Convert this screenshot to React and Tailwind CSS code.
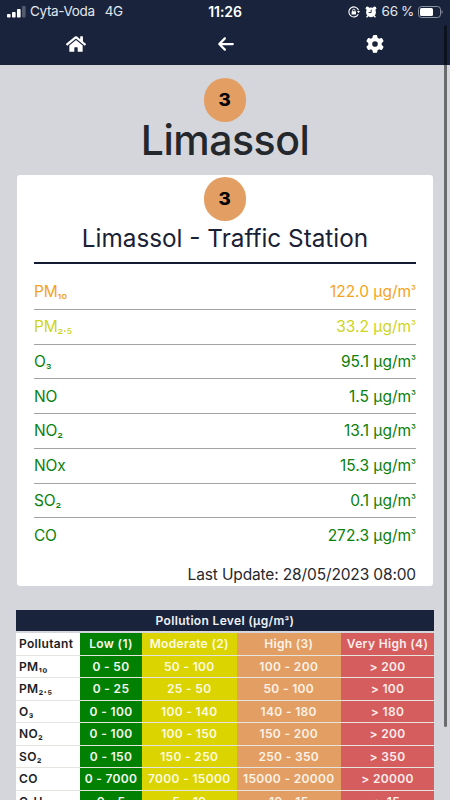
import clsx from 'clsx';
import { FaHome } from 'react-icons/fa';
import { FaArrowLeft, FaGear } from 'react-icons/fa6';

const readings = [
    { name: 'PM', sub: '₁₀', value: '122.0', color: 'text-[#f5a31c]' },
    { name: 'PM', sub: '₂.₅', value: '33.2', color: 'text-[#cdd51c]' },
    { name: 'O', sub: '₃', value: '95.1', color: 'text-[#0b800b]' },
    { name: 'NO', value: '1.5', color: 'text-[#0b800b]' },
    { name: 'NO', sub: '₂', value: '13.1', color: 'text-[#0b800b]' },
    { name: 'NOx', value: '15.3', color: 'text-[#0b800b]' },
    { name: 'SO', sub: '₂', value: '0.1', color: 'text-[#0b800b]' },
    { name: 'CO', value: '272.3', color: 'text-[#0b800b]' },
];

const levels = [
    ['Pollutant', 'Low (1)', 'Moderate (2)', 'High (3)', 'Very High (4)'],
    ['PM₁₀', '0 - 50', '50 - 100', '100 - 200', '> 200'],
    ['PM₂.₅', '0 - 25', '25 - 50', '50 - 100', '> 100'],
    ['O₃', '0 - 100', '100 - 140', '140 - 180', '> 180'],
    ['NO₂', '0 - 100', '100 - 150', '150 - 200', '> 200'],
    ['SO₂', '0 - 150', '150 - 250', '250 - 350', '> 350'],
    ['CO', '0 - 7000', '7000 - 15000', '15000 - 20000', '> 20000'],
    ['C₆H₆', '0 - 5', '5 - 10', '10 - 15', '> 15'],
];

const columnStyles = [
    'bg-white text-[#1c1e24] pl-[3px] text-left',
    'bg-[#018001] text-[#f4fbf0] text-center',
    'bg-[#dbd400] text-[#fbfae0] text-center',
    'bg-[#e39e63] text-[#fdf3e8] text-center',
    'bg-[#d65d5d] text-[#fdeeee] text-center',
];

function StatusBar() {
    return (
        <div className="flex h-[23px] items-center justify-between pl-[7px] pr-[7px] text-[14px] text-[#e3e7ee]">
            <div className="flex flex-1 items-center">
                <svg width="19" height="12" viewBox="0 0 19 12" fill="#fff">
                    <rect x="0" y="8" width="3.6" height="3.6" rx="0.8" />
                    <rect x="5" y="6" width="3.6" height="5.6" rx="0.8" />
                    <rect x="10" y="3" width="3.6" height="8.6" rx="0.8" />
                    <rect x="15" y="0" width="3.6" height="11.6" rx="0.8" opacity="0.25" />
                </svg>
                <span className="ml-1 text-[13.5px] tracking-[-0.35px]">Cyta-Voda</span>
                <span className="ml-[10px] text-[13.5px] tracking-[-0.5px]">4G</span>
            </div>
            <div className="text-[14px] font-semibold tracking-[-0.1px] text-white">11:26</div>
            <div className="flex flex-1 items-center justify-end">
                <svg width="12" height="12" viewBox="0 0 12 12" fill="none" stroke="#fff" strokeWidth="1.1">
                    <path d="M10.3 8.3A5 5 0 1 1 10.6 4.2" />
                    <path d="M8.9 5h3.1l-1.5 2.2z" fill="#fff" stroke="none" />
                    <rect x="3.6" y="5.3" width="4.4" height="3.3" rx="0.5" fill="#fff" stroke="none" />
                    <path d="M4.6 5.6V4.4a1.2 1.2 0 0 1 2.4 0v1.2" strokeWidth="0.9" />
                </svg>
                <svg className="ml-[5px]" width="12" height="12" viewBox="0 0 12 12" fill="#fff">
                    <circle cx="6" cy="6.3" r="4.9" />
                    <circle cx="2.4" cy="2.3" r="1.7" />
                    <circle cx="9.6" cy="2.3" r="1.7" />
                    <path d="M2.9 9.6l-1.3 1.8M9.1 9.6l1.3 1.8" stroke="#fff" strokeWidth="1.4" />
                    <path d="M6.2 3.6v2.9H3.6" fill="none" stroke="#19243c" strokeWidth="0.9" />
                </svg>
                <span className="ml-[5px] text-[13.5px] tracking-[-0.35px]">66 %</span>
                <svg className="ml-1" width="25" height="12" viewBox="0 0 25 12" fill="none">
                    <rect x="0.5" y="0.5" width="22" height="11" rx="3" stroke="#8b93a3" />
                    <rect x="2" y="2" width="13" height="8" rx="1.5" fill="#fff" />
                    <path d="M23.6 4v4c1.4-.6 1.4-3.4 0-4z" fill="#8b93a3" />
                </svg>
            </div>
        </div>
    );
}

function NavBar() {
    return (
        <nav className="grid h-[41px] grid-cols-3 items-center px-[1px] text-white">
            <FaHome className="ml-[65px] size-5" />
            <FaArrowLeft className="ml-[67px] size-[18px]" />
            <FaGear className="ml-[66px] size-[18px]" />
        </nav>
    );
}

function LevelBadge({ level }) {
    return (
        <div className="mx-auto flex h-11 w-[42px] items-center justify-center rounded-full bg-[#e39e63] pt-[2px] text-[17px] font-extrabold text-black">
            <span className="scale-x-110">{level}</span>
        </div>
    );
}

// shrinks subscript digits, which Inter draws wide
function Formula({ text }) {
    return text.split(/([₀-₉.]+)/).map((part, i) =>
        i % 2 ? <span key={i} className="text-[0.88em]">{part}</span> : part
    );
}

function StationCard() {
    return (
        <section className="ml-[17px] mr-[17px] h-[411px] rounded-[3px] bg-white px-[17px] pt-[2px]">
            <LevelBadge level={3} />
            <h2 className="h-[43px] border-b-2 border-[#131b33] text-center text-[24.3px] leading-[35px] whitespace-nowrap text-[#1a2135]">
                Limassol - Traffic Station
            </h2>
            <ul className="pt-[11px] text-[15.5px]">
                {readings.map((r) => (
                    <li
                        key={r.name + (r.sub ?? '')}
                        className={clsx('flex h-[34.75px] items-center justify-between border-b border-[#a3a3a3] last:border-b-0', r.color)}
                    >
                        <span className="tracking-[-0.2px]">
                            {r.name}
                            {r.sub && <span className="text-[13px]">{r.sub}</span>}
                        </span>
                        <span>
                            {r.value} μg/m<span className="relative -top-[2px] text-[11px] leading-none">³</span>
                        </span>
                    </li>
                ))}
            </ul>
            <p className="mt-[10px] text-right text-[15.5px] leading-6 tracking-[-0.14px] text-[#26282d]">Last Update: 28/05/2023 08:00</p>
        </section>
    );
}

function LevelTable() {
    return (
        <section className="ml-4 mr-4 mt-6 text-[12px] font-semibold tracking-[0.33px]">
            <h3 className="h-[21px] bg-[#19243c] text-center leading-[21px] text-[#eef1f6]">
                Pollution Level (μg/m<span className="text-[10px]">³</span>)
            </h3>
            <div className="mt-[2px]">
                {levels.map((row) => (
                    <div
                        key={row[0]}
                        className="grid h-[23px] grid-cols-[64px_62px_94.5px_104.5px_93px] grid-rows-[100%] border-b border-[#e6e4de] even:h-[22px]"
                    >
                        {row.map((cell, i) => (
                            <div key={i} className={clsx('leading-[22px] whitespace-nowrap', columnStyles[i])}>
                                {i === 0 && cell !== 'Pollutant' ? <Formula text={cell} /> : cell}
                            </div>
                        ))}
                    </div>
                ))}
            </div>
        </section>
    );
}

export default function App() {
    return (
        <div className="relative h-[800px] w-[450px] overflow-hidden bg-[#d5d6db] font-['Inter',sans-serif]">
            <header className="h-[65px] bg-[#19243c]">
                <StatusBar />
                <NavBar />
            </header>
            <main className="pt-[13px]">
                <LevelBadge level={3} />
                <h1 className="h-[53px] text-center text-[41px] leading-[36px] font-medium tracking-[-0.5px] text-[#24272c]">Limassol</h1>
                <StationCard />
                <LevelTable />
            </main>
            {/* scroll indicator */}
            <div className="absolute right-[3px] top-[25px] h-[702px] w-[3px] rounded-full bg-black/50" />
        </div>
    );
}
